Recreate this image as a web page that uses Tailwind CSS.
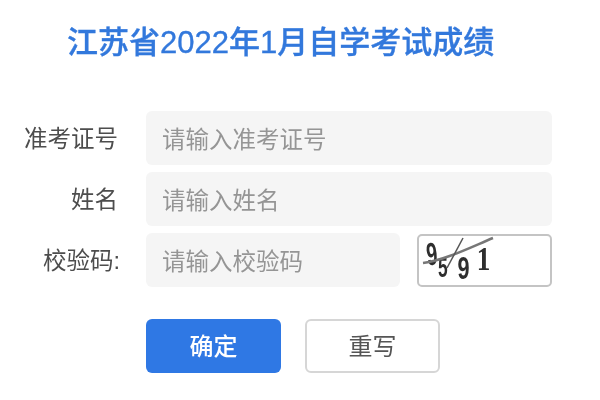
<!DOCTYPE html>
<html lang="zh-CN">
<head>
<meta charset="utf-8">
<script src="https://cdn.jsdelivr.net/npm/@tailwindcss/browser@4"></script>
</head>
<body class="bg-white">
<div class="w-[600px] h-[400px] overflow-hidden font-['Liberation_Sans','Noto_Sans_CJK_SC',sans-serif] blur-[0.4px]">
  <h1 class="pl-[67px] pt-[22px] h-[111px] text-[31px] leading-[42px] font-medium [-webkit-text-stroke:0.35px_#3278dc] text-[#3278dc] whitespace-nowrap">江苏省2022年1月自学考试成绩</h1>
  <form class="flex flex-col gap-[7px] w-[552px]">
    <div class="flex items-center h-[54px]">
      <label class="w-[118px] pt-[4px] text-right text-[23.5px] text-[#4d4d4d]">准考证号</label>
      <div class="ml-[28px] flex-1 h-full rounded-[6px] bg-[#f5f5f5] pl-[16px] pt-[6px] flex items-center text-[23.5px] text-[#959595]">请输入准考证号</div>
    </div>
    <div class="flex items-center h-[54px]">
      <label class="w-[118px] pt-[4px] text-right text-[23.5px] text-[#4d4d4d]">姓名</label>
      <div class="ml-[28px] flex-1 h-full rounded-[6px] bg-[#f5f5f5] pl-[16px] pt-[6px] flex items-center text-[23.5px] text-[#959595]">请输入姓名</div>
    </div>
    <div class="flex items-center h-[54px]">
      <label class="w-[120px] pt-[4px] text-right text-[23.5px] text-[#4d4d4d]">校验码:</label>
      <div class="ml-[26px] w-[254px] h-full rounded-[6px] bg-[#f5f5f5] pl-[16px] pt-[6px] flex items-center text-[23.5px] text-[#959595]">请输入校验码</div>
      <div class="relative ml-[17px] w-[135px] h-[53px] rounded-[5px] border-2 border-[#c4c4c4] bg-white font-['Liberation_Sans',sans-serif] font-bold text-[#2e2e2e]">
        <span class="absolute left-[4px] top-[2px] inline-block scale-x-[0.62] -rotate-6 text-[32px] leading-[32px]">9</span>
        <span class="absolute left-[16px] top-[18px] inline-block scale-x-[0.62] text-[28px] leading-[28px]">5</span>
        <span class="absolute left-[36px] top-[18px] inline-block scale-x-[0.7] text-[31px] leading-[30px]">9</span>
        <span class="absolute left-[56px] top-[7px] inline-block scale-x-[0.8] font-['Liberation_Serif',serif] text-[34px] leading-[32px]">1</span>
        <svg class="absolute inset-0" width="131" height="49" viewBox="0 0 131 49" fill="none">
          <path d="M4 27 C26 24 50 12 74 2" stroke="#777" stroke-width="2.5"/>
          <path d="M28 32 L44 2" stroke="#555" stroke-width="1.5"/>
        </svg>
      </div>
    </div>
    <div class="flex gap-[24px] pl-[146px] mt-[25px]">
      <button type="button" class="w-[135px] h-[54px] pt-[1px] rounded-[6px] bg-[#2f78e4] text-white text-[24px] font-medium">确定</button>
      <button type="button" class="w-[135px] h-[54px] pt-[1px] rounded-[6px] border-2 border-[#d6d6d6] bg-white text-[#555] text-[24px]">重写</button>
    </div>
  </form>
</div>
</body>
</html>
